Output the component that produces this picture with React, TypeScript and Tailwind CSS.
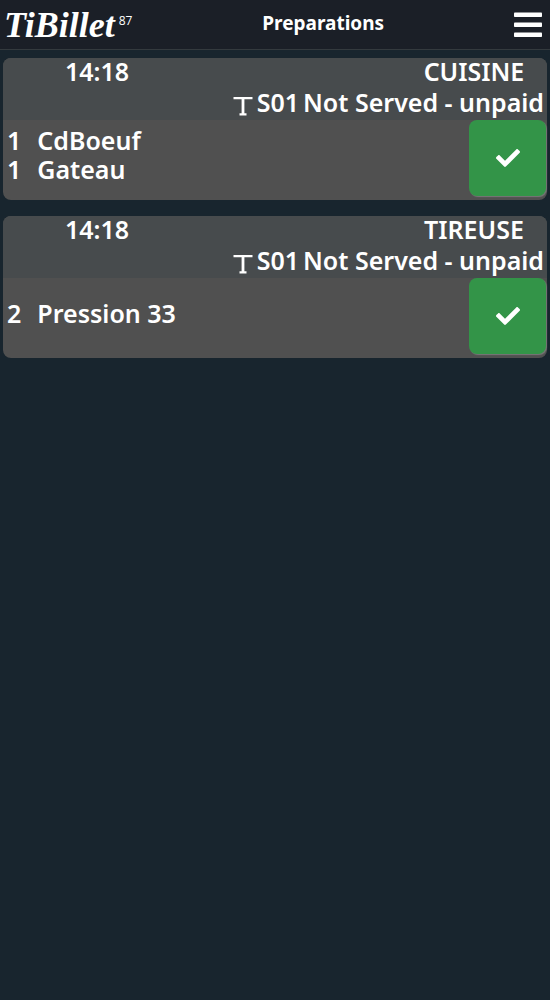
import React from "react";
import { FaCheck } from "react-icons/fa";

type Line = { quantity: number; name: string };
type Order = { time: string; place: string; table: string; status: string; lines: Line[] };

const orders: Order[] = [
  {
    time: "14:18",
    place: "CUISINE",
    table: "S01",
    status: "Not Served - unpaid",
    lines: [
      { quantity: 1, name: "CdBoeuf" },
      { quantity: 1, name: "Gateau" },
    ],
  },
  {
    time: "14:18",
    place: "TIREUSE",
    table: "S01",
    status: "Not Served - unpaid",
    lines: [{ quantity: 2, name: "Pression 33" }],
  },
];

function TableIcon() {
  return (
    <svg viewBox="0 0 20 20" className="mt-2 h-5 w-5 shrink-0" fill="currentColor" aria-hidden="true">
      <path d="M.5 1h19v2.200H.5zM8.600 3h2.800v14.500H8.600zM6.500 17.200h7V19.500h-7z" />
    </svg>
  );
}

function Header() {
  return (
    <header className="flex h-[50px] items-center justify-between border-b border-[#343a3e] bg-[#1b1f27] pr-2 pl-1">
      <div className="flex items-start">
        <a href="#" className="font-['Liberation_Serif',serif] text-4xl leading-10 font-bold italic">
          TiBillet
        </a>
        <span className="mt-1 ml-1 font-['Open_Sans',sans-serif] text-xs leading-6">87</span>
      </div>
      <h1 className="pb-1 text-[19px] leading-8 font-bold">Preparations</h1>
      <button type="button" aria-label="Menu" className="block h-7 w-7">
        <svg viewBox="0 0 28 28" className="h-7 w-7" fill="currentColor" aria-hidden="true">
          <rect x="0" y="1.500" width="28" height="4.500" rx="0.800" />
          <rect x="0" y="11.500" width="28" height="4.500" rx="0.800" />
          <rect x="0" y="21.500" width="28" height="4.500" rx="0.800" />
        </svg>
      </button>
    </header>
  );
}

function OrderCard({ order }: { order: Order }) {
  return (
    <article className="rounded-lg bg-[#505050] text-[25px] font-semibold">
      <div className="rounded-t-lg bg-[#474b4d] pb-[2px]">
        <div className="flex justify-between pb-[2px] leading-[26px]">
          <time className="w-[188px] text-center">{order.time}</time>
          <h2 className="w-[146px] text-center">{order.place}</h2>
        </div>
        <div className="flex items-center justify-end gap-1 pr-[3px] leading-8">
          <TableIcon />
          <span>{order.table}</span>
          <span>{order.status}</span>
        </div>
      </div>
      <div className="flex h-20 items-start justify-between pr-px">
        <ul className="flex h-[70px] flex-col justify-center pl-1">
          {order.lines.map((line) => (
            <li key={line.name} className="flex gap-4 leading-[29px]">
              <span>{line.quantity}</span>
              <span>{line.name}</span>
            </li>
          ))}
        </ul>
        <button
          type="button"
          aria-label="Mark as served"
          className="flex h-[76px] w-[77px] items-center justify-center rounded-lg bg-[#339448] text-2xl shadow-[1px_1px_1px_#777777]"
        >
          <FaCheck />
        </button>
      </div>
    </article>
  );
}

export default function App() {
  return (
    <div className="min-h-screen bg-[#18252e] font-['Noto_Sans',sans-serif] text-white">
      <Header />
      <main className="flex flex-col gap-4 px-[3px] py-2">
        {orders.map((order) => (
          <OrderCard key={order.place} order={order} />
        ))}
      </main>
    </div>
  );
}
